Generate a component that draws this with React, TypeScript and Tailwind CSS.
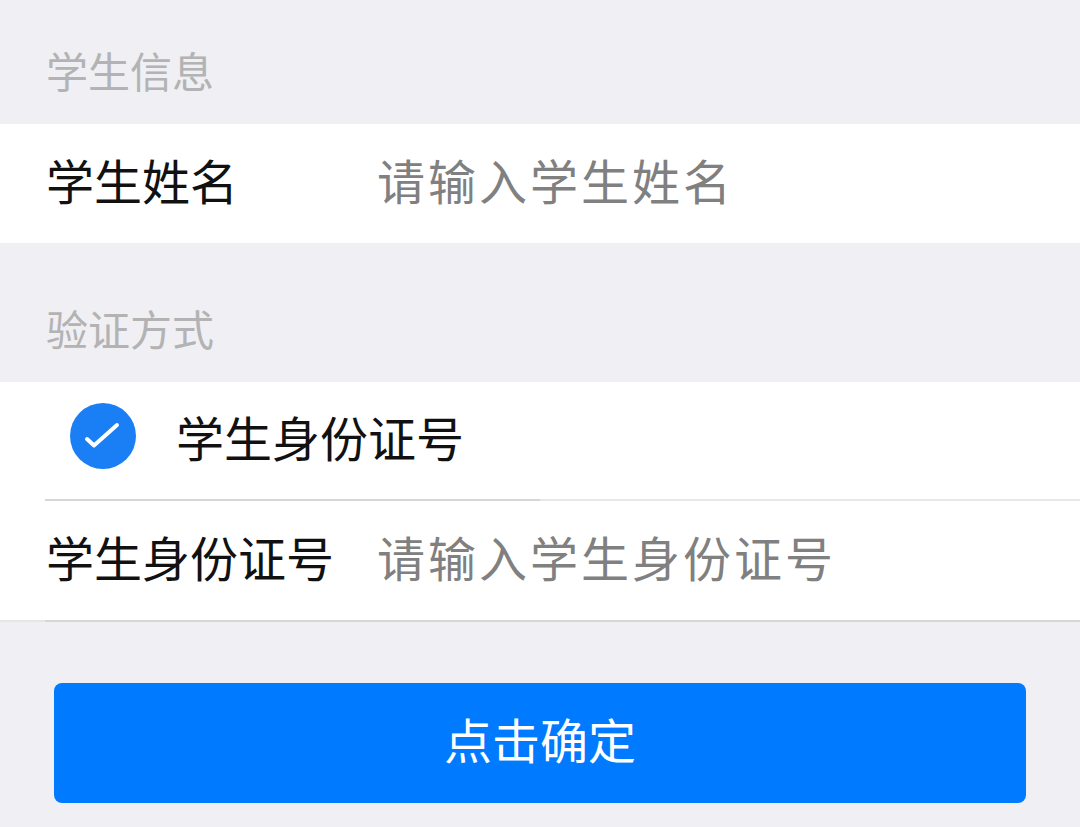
import { useState } from 'react'

const font = { fontFamily: '"Noto Sans CJK SC", "Noto Sans", sans-serif' }

export default function App() {
  const [name, setName] = useState('')
  const [idNo, setIdNo] = useState('')
  const [checked, setChecked] = useState(true)

  return (
    <div className="min-h-[827px] bg-[#efeff4] flex flex-col" style={font}>
      {/* 学生信息 */}
      <div className="h-[124px] pt-[49px] px-[46px] text-[42px] leading-[42px] text-[#b3b3b3]">
        学生信息
      </div>
      <FieldRow label="学生姓名" placeholder="请输入学生姓名" value={name} onChange={setName} />

      {/* 验证方式 */}
      <div className="h-[139px] pt-[64px] px-[46px] text-[42px] leading-[42px] text-[#b3b3b3]">
        验证方式
      </div>

      <div className="bg-white pl-[45px]">
        <button
          type="button"
          onClick={() => setChecked(!checked)}
          className="h-[117px] w-full flex items-center gap-[40px] pl-[25px] pb-[10px] text-left"
        >
          <span
            className={`w-[66px] h-[66px] rounded-full flex items-center justify-center ${
              checked ? 'bg-[#1a7ef5]' : 'border-2 border-[#c8c8cc]'
            }`}
          >
            {checked && (
              <svg width="40" height="40" viewBox="0 0 40 40" fill="none">
                <path d="M4 23 L11 29.5 L34 9" stroke="white" strokeWidth="4" strokeLinecap="round" strokeLinejoin="round" />
              </svg>
            )}
          </span>
          <span className="text-[48px] leading-none text-[#111]">学生身份证号</span>
        </button>
        <div className="flex">
          <div className="h-[2px] w-[495px] bg-[#d6d6d6]" />
          <div className="h-[2px] flex-1 bg-[#e8e8e8]" />
        </div>
      </div>

      <FieldRow label="学生身份证号" placeholder="请输入学生身份证号" value={idNo} onChange={setIdNo} />
      <div className="flex">
        <div className="h-[2px] w-[45px] bg-[#e6e6e6]" />
        <div className="h-[2px] flex-1 bg-[#d6d6d6]" />
      </div>

      <div className="px-[54px] pt-[61px]">
        <button
          type="button"
          className="w-full h-[120px] rounded-[8px] bg-[#007aff] pb-[10px] text-white text-[48px] leading-none"
        >
          点击确定
        </button>
      </div>
    </div>
  )
}

function FieldRow({
  label,
  placeholder,
  value,
  onChange,
}: {
  label: string
  placeholder: string
  value: string
  onChange: (v: string) => void
}) {
  return (
    <div className="h-[119px] bg-white flex items-center pl-[46px] pb-[10px]">
      <span className="w-[331px] shrink-0 text-[48px] leading-none text-[#111]">{label}</span>
      <input
        value={value}
        onChange={(e) => onChange(e.target.value)}
        placeholder={placeholder}
        className="flex-1 min-w-0 bg-transparent outline-none text-[48px] tracking-[3px] leading-none text-[#111] placeholder:text-[#808080]"
      />
    </div>
  )
}
